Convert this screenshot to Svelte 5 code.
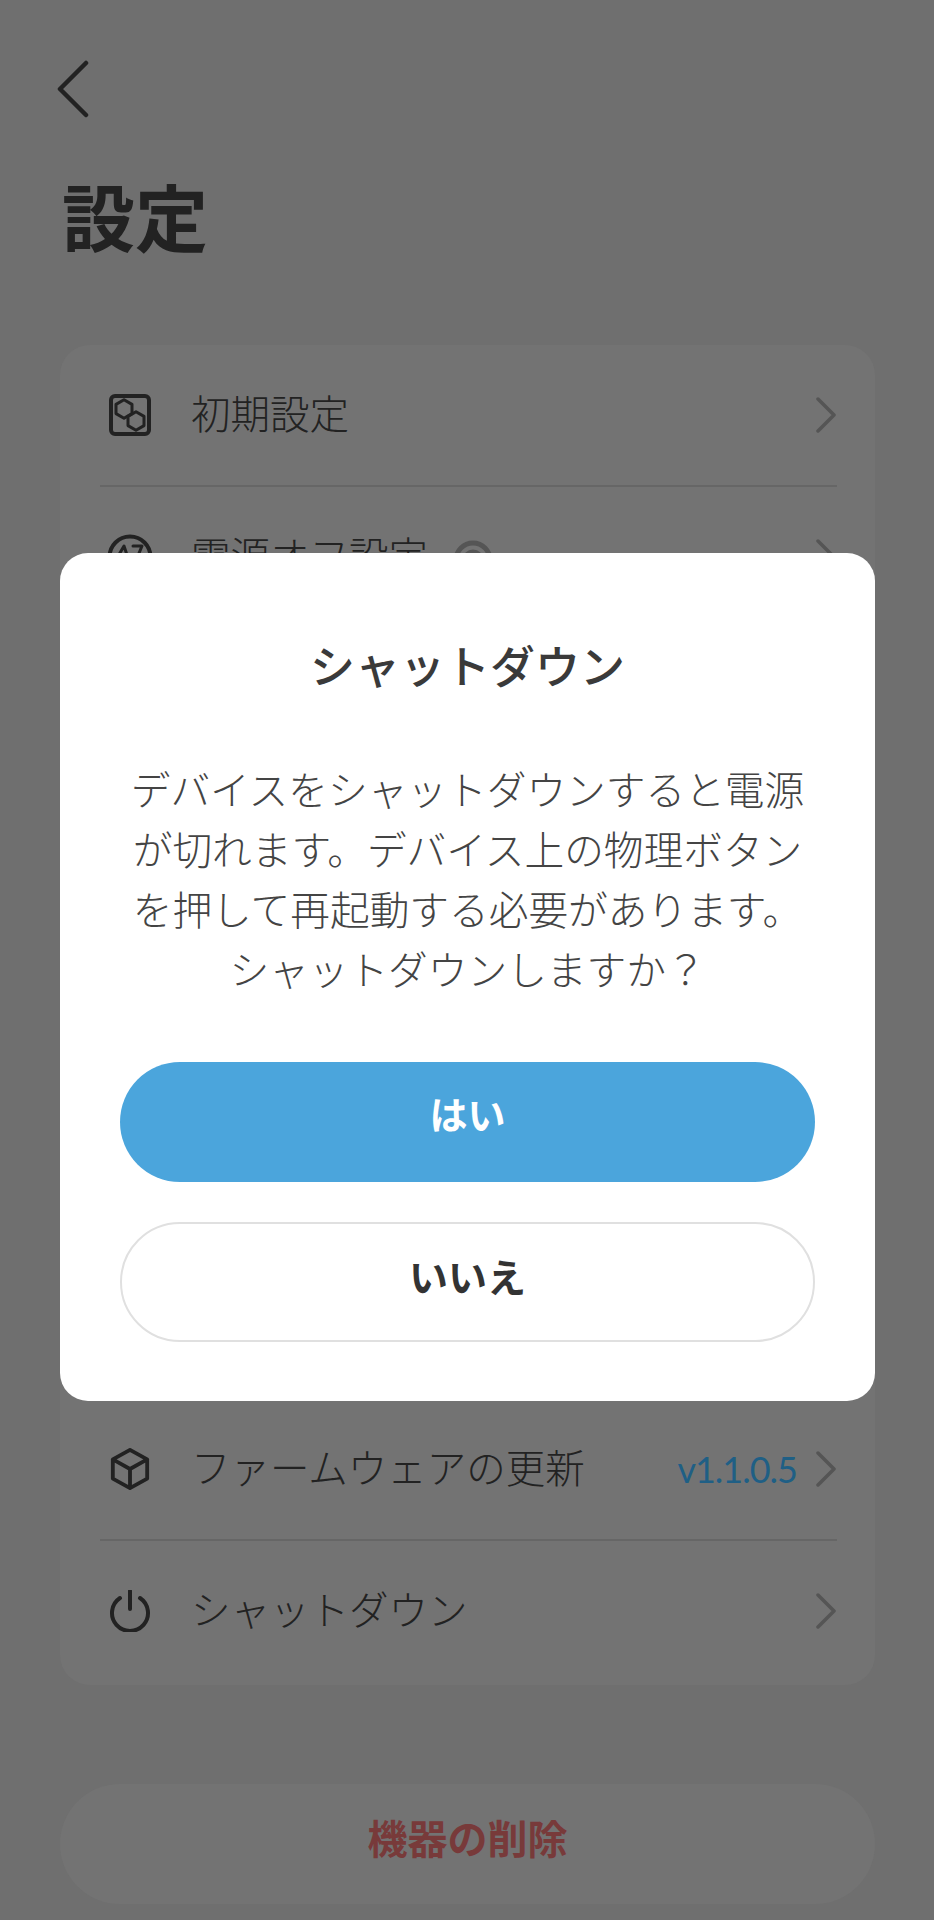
<script lang="ts">
	const body_lines = [
		'デバイスをシャットダウンすると電源',
		'が切れます。デバイス上の物理ボタン',
		'を押して再起動する必要があります。',
		'シャットダウンしますか？'
	];
</script>

{#snippet chevron()}
	<svg class="chevron" viewBox="0 0 22 36" width="22" height="36" aria-hidden="true">
		<path d="M3 2 L19 18 L3 34" />
	</svg>
{/snippet}

<div class="page">
	<button class="back" aria-label="戻る">
		<svg viewBox="0 0 32 58" width="32" height="58" aria-hidden="true">
			<path d="M29 3 L3 29 L29 55" />
		</svg>
	</button>

	<h1>設定</h1>

	<section class="card">
		<div class="row">
			<svg class="icon" viewBox="0 0 42 42" aria-hidden="true">
				<rect x="2" y="2" width="38" height="38" rx="4" />
				<path class="thin" d="M15 5.7 L23 10.4 V19.6 L15 24.3 L7 19.6 V10.4 Z" />
				<path class="thin" d="M27 17.7 L35 22.4 V31.6 L27 36.3 L19 31.6 V22.4 Z" />
			</svg>
			<span class="name">初期設定</span>
			{@render chevron()}
		</div>
		<div class="row">
			<svg class="icon timer" viewBox="0 0 46 46" aria-hidden="true">
				<circle cx="23" cy="23" r="20.5" />
				<path class="thin" d="M10 24 L17 12 L21 24 M26 12 H35 L30 24" />
			</svg>
			<span class="name">電源オフ設定</span>
			<svg class="help" viewBox="0 0 42 42" aria-hidden="true">
				<circle cx="21" cy="21" r="17" />
				<circle cx="21" cy="21" r="8" />
			</svg>
			{@render chevron()}
		</div>

		<div class="covered"></div>

		<div class="row">
			<svg class="icon" viewBox="0 0 42 44" aria-hidden="true">
				<path d="M21 2 L39 12 V32 L21 42 L3 32 V12 Z M3 12 L21 22 L39 12 M21 22 V42" />
			</svg>
			<span class="name">ファームウェアの更新</span>
			<span class="version">v1.1.0.5</span>
			{@render chevron()}
		</div>
		<div class="row last">
			<svg class="icon" viewBox="0 0 42 42" aria-hidden="true">
				<path d="M11 8 A18 18 0 1 0 31 8 M21 1 V19" />
			</svg>
			<span class="name">シャットダウン</span>
			{@render chevron()}
		</div>
	</section>

	<button class="delete">機器の削除</button>

	<div class="overlay">
		<div class="modal">
			<h2>シャットダウン</h2>
			<p>
				{#each body_lines as line}
					<span>{line}</span>
				{/each}
			</p>
			<button class="btn primary">はい</button>
			<button class="btn outline">いいえ</button>
		</div>
	</div>
</div>

<style>
	:global(body) {
		margin: 0;
		background: #6f6f6f;
	}

	.page {
		position: relative;
		box-sizing: border-box;
		height: 1920px;
		padding: 60px 59px 0 60px;
		overflow: hidden;
		font-family: 'Noto Sans CJK JP', 'Noto Sans', sans-serif;
		color: #262626;
	}

	button {
		font-family: inherit;
		border: 0;
		padding: 0;
		background: none;
	}

	.back {
		display: block;
		width: 32px;
		height: 58px;
		margin-left: -3px;
	}

	.back svg,
	.chevron,
	.icon,
	.help {
		display: block;
		fill: none;
		stroke-linecap: round;
		stroke-linejoin: round;
	}

	.back path {
		fill: none;
		stroke: #222;
		stroke-width: 4.5;
		stroke-linecap: round;
		stroke-linejoin: round;
	}

	h1 {
		margin: 54px 0 0 2px;
		font-size: 73px;
		line-height: 84px;
		font-weight: 700;
		color: #222;
	}

	.card {
		margin-top: 89px;
		border-radius: 30px;
		background: #737373;
		padding: 0 38px 0 40px;
	}

	.row {
		display: flex;
		align-items: center;
		height: 140px;
	}

	.row + .row {
		border-top: 2px solid #666;
	}

	.row.last {
		padding-bottom: 4px;
	}

	.covered {
		height: 772px;
	}

	.icon {
		flex: none;
		width: 42px;
		height: 42px;
		margin-left: 9px;
		stroke: #222;
		stroke-width: 4;
		stroke-linejoin: round;
	}

	.icon.timer {
		width: 46px;
		height: 46px;
		margin-left: 7px;
		margin-right: -2px;
	}

	.icon .thin {
		stroke-width: 3;
	}

	.name {
		margin-left: 40px;
		padding-bottom: 7px;
		font-size: 39.5px;
		font-weight: 300;
		color: #222;
	}

	.help {
		width: 42px;
		height: 42px;
		margin: 6px 0 0 24px;
		stroke: #555;
		stroke-width: 5;
	}

	.version {
		margin-left: auto;
		font-family: Lato, sans-serif;
		font-size: 36px;
		font-weight: 400;
		letter-spacing: -1px;
		color: #1f5f85;
	}

	.chevron {
		flex: none;
		margin-left: auto;
		stroke: #555;
		stroke-width: 3.5;
		fill: none;
	}

	.version + .chevron {
		margin-left: 18px;
	}

	.chevron path {
		fill: none;
	}

	.delete {
		display: block;
		box-sizing: border-box;
		width: 100%;
		height: 120px;
		margin-top: 99px;
		padding-bottom: 14px;
		border-radius: 60px;
		background: #737373;
		font-size: 40px;
		font-weight: 700;
		color: #783a3a;
	}

	.overlay {
		position: absolute;
		inset: 0;
		display: flex;
		align-items: flex-start;
		justify-content: center;
		padding: 553px 59px 0 60px;
	}

	.modal {
		box-sizing: border-box;
		width: 815px;
		height: 848px;
		padding: 0 60px;
		border-radius: 28px;
		background: #fff;
		text-align: center;
	}

	h2 {
		margin: 83px 0 0;
		font-size: 45px;
		line-height: 58px;
		font-weight: 500;
		color: #3a3a3a;
	}

	p {
		margin: 64px -10px 0;
		font-size: 39.7px;
		line-height: 60px;
		font-weight: 300;
		color: #444;
	}

	p span {
		display: block;
	}

	.btn {
		display: block;
		box-sizing: border-box;
		width: 100%;
		height: 120px;
		border-radius: 60px;
		font-weight: 700;
	}

	.primary {
		margin-top: 64px;
		padding-bottom: 19px;
		background: #4ba5dc;
		font-size: 38px;
		color: #fff;
	}

	.outline {
		margin-top: 40px;
		padding-bottom: 15px;
		border: 2px solid #e0e0e0;
		background: #fff;
		font-size: 39px;
		color: #333;
	}
</style>
